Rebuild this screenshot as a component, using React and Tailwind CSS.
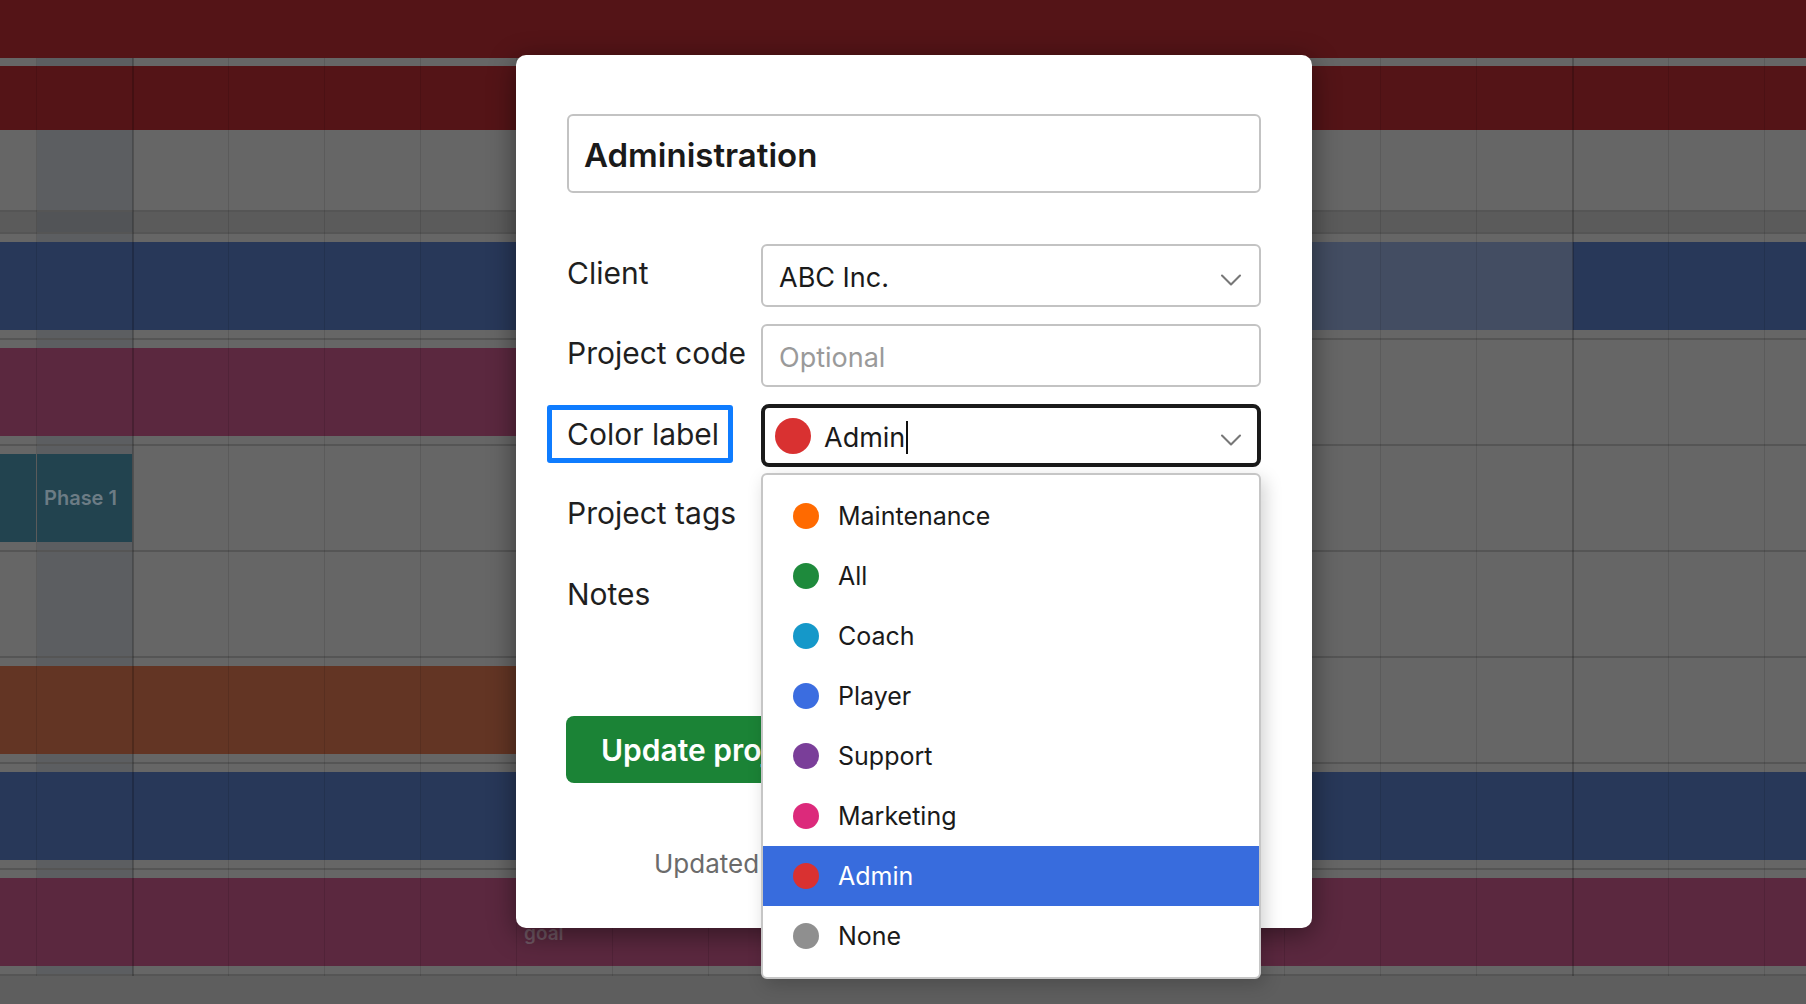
import { ChevronDown } from 'lucide-react';

const colorOptions = [
  { name: 'Maintenance', dot: 'bg-[#ff6a00]' },
  { name: 'All', dot: 'bg-[#1e8a3c]' },
  { name: 'Coach', dot: 'bg-[#1598c9]' },
  { name: 'Player', dot: 'bg-[#3b6de0]' },
  { name: 'Support', dot: 'bg-[#7a3e99]' },
  { name: 'Marketing', dot: 'bg-[#dc2a7b]' },
  { name: 'Admin', dot: 'bg-[#d93131]', active: true },
  { name: 'None', dot: 'bg-[#8f8f8f]' },
];

function Row({ children }) {
  return (
    <div className="flex flex-col">
      <div className="h-[8px]" />
      <div className="h-[88px] flex">{children}</div>
      <div className="h-[8px]" />
      <div className="h-[2px] bg-[#555555]" />
    </div>
  );
}

function Schedule() {
  return (
    <>
      {/* today column tint, under the bars */}
      <div className="absolute inset-0 flex">
        <div className="w-[37px]" />
        <div className="w-[96px] bg-[#0a1e3c]/10" />
      </div>

      <div className="relative flex flex-col">
        <div className="h-[58px] bg-[#541417]" />
        <div className="h-[8px]" />
        <div className="h-[64px] bg-[#541417]" />
        <div className="h-[80px]" />
        <div className="h-[2px] bg-[#555555]" />
        <div className="h-[20px] bg-black/10" />
        <div className="h-[2px] bg-[#555555]" />

        <Row>
          <div className="w-[1285px] bg-[#283859]" />
          <div className="w-[288px] bg-[#434d62]" />
          <div className="flex-1 bg-[#283859]" />
        </Row>
        <Row>
          <div className="w-[1000px] bg-[#5b283f]" />
        </Row>
        <Row>
          <div className="w-[36px] bg-[#22434f]" />
          <div className="w-[1px]" />
          <div className="w-[95px] bg-[#22434f] flex items-center pl-[7px] text-[20px] font-semibold text-[#6c7c85]">
            Phase 1
          </div>
        </Row>
        <Row />
        <Row>
          <div className="w-[1000px] bg-[#633524]" />
        </Row>
        <Row>
          <div className="flex-1 bg-[#283859]" />
        </Row>
        <Row>
          <div className="w-[517px] bg-[#5b283f]" />
          <div className="flex-1 bg-[#5b283f] pl-[7px] pt-[44px] text-[19px] leading-[24px] font-semibold text-[#6f5763]">
            goal
          </div>
        </Row>
        <div className="h-[28px] bg-[#5e5e5e]" />
      </div>

      {/* grid lines */}
      <div className="absolute left-0 right-0 top-[58px] bottom-[28px] flex pointer-events-none">
        <div className="w-[36px] shrink-0" />
        {Array.from({ length: 19 }).map((_, i) => (
          <div
            key={i}
            className={
              i === 1 || i === 16
                ? 'w-[96px] shrink-0 border-l-2 border-black/20'
                : 'w-[96px] shrink-0 border-l border-black/10'
            }
          />
        ))}
      </div>
    </>
  );
}

function Field({ label, children, labelClass = 'pt-[12px]' }) {
  return (
    <div className="flex items-start">
      <div className={`w-[194px] shrink-0 text-[30px] leading-[36px] text-[#1f1f1f] ${labelClass}`}>{label}</div>
      <div className="w-[500px]">{children}</div>
    </div>
  );
}

function Chevron() {
  return <ChevronDown size={36} strokeWidth={1.4} className="text-[#777777] shrink-0 translate-y-[4px]" />;
}

export default function App() {
  return (
    <div className="relative w-[1806px] h-[1004px] overflow-hidden bg-[#666666] font-['Inter',sans-serif]">
      <Schedule />

      {/* project modal */}
      <div className="absolute left-[516px] top-[55px] w-[796px] h-[873px] bg-white rounded-[10px] shadow-[0_6px_28px_rgba(0,0,0,0.45)] px-[51px] pt-[59px] flex flex-col">
        <div className="h-[79px] border-2 border-[#c3c3c3] rounded-[6px] px-[15px] flex items-center text-[33px] font-semibold text-[#1a1a1a]">
          <span className="translate-y-[2px]">Administration</span>
        </div>

        <div className="mt-[51px] flex flex-col gap-[17px]">
          <Field label="Client" labelClass="pt-[11px]">
            <div className="h-[63px] border-2 border-[#c3c3c3] rounded-[6px] pl-[16px] pr-[10px] flex items-center justify-between text-[27px] text-[#1a1a1a]">
              <span className="translate-y-[3px]">ABC Inc.</span>
              <Chevron />
            </div>
          </Field>

          <Field label="Project code" labelClass="pt-[11px]">
            <div className="h-[63px] border-2 border-[#c3c3c3] rounded-[6px] pl-[16px] flex items-center text-[27px] text-[#9a9a9a]">
              <span className="translate-y-[3px]">Optional</span>
            </div>
          </Field>

          <div className="flex items-start">
            <div className="w-[194px] shrink-0 pt-[1px]">
              <div className="-ml-[20px] w-[186px] border-[5px] border-[#0f7cff] rounded-[3px] pl-[15px] py-[6px] text-[30px] leading-[36px] text-[#1f1f1f]">
                Color label
              </div>
            </div>
            <div className="w-[500px] h-[63px] border-[4px] border-[#1a1a1a] rounded-[8px] pl-[10px] pr-[8px] flex items-center text-[27px] text-[#1a1a1a]">
              <span className="w-[36px] h-[36px] rounded-full bg-[#d93131] shrink-0" />
              <span className="ml-[13px] translate-y-[3px]">Admin</span>
              <span className="ml-[1px] w-[2px] h-[33px] bg-[#111111] translate-y-[2px]" />
              <span className="ml-auto">
                <Chevron />
              </span>
            </div>
          </div>

          <Field label="Project tags" labelClass="pt-[11px]">
            <div className="h-[63px] border-2 border-[#c3c3c3] rounded-[6px]" />
          </Field>

          <Field label="Notes" labelClass="pt-[12px]">
            <div className="h-[120px] border-2 border-[#c3c3c3] rounded-[6px]" />
          </Field>
        </div>

        <button className="mt-[32px] self-start -ml-[1px] h-[67px] px-[35px] rounded-[8px] bg-[#1b8336] text-white text-[30px] font-semibold whitespace-nowrap">
          <span className="inline-block translate-y-[1px]">Update project</span>
        </button>

        <div className="mt-[65px] pl-[87px] text-[26px] leading-[32px] text-[#6b6b6b] whitespace-nowrap">
          Updated 2 days ago by Jane Doe
        </div>

        {/* color label menu */}
        <div className="absolute left-[245px] top-[418px] w-[500px] h-[506px] bg-white border-2 border-[#c6c6c6] rounded-[6px] py-[11px] shadow-[4px_6px_18px_rgba(0,0,0,0.18)]">
          {colorOptions.map((opt) => (
            <div
              key={opt.name}
              className={`h-[60px] flex items-center pl-[30px] text-[25px] ${
                opt.active ? 'bg-[#386cdd] text-white' : 'text-[#1a1a1a]'
              }`}
            >
              <span className={`w-[26px] h-[26px] rounded-full shrink-0 ${opt.dot}`} />
              <span className="ml-[19px] translate-y-[1px]">{opt.name}</span>
            </div>
          ))}
        </div>
      </div>
    </div>
  );
}
